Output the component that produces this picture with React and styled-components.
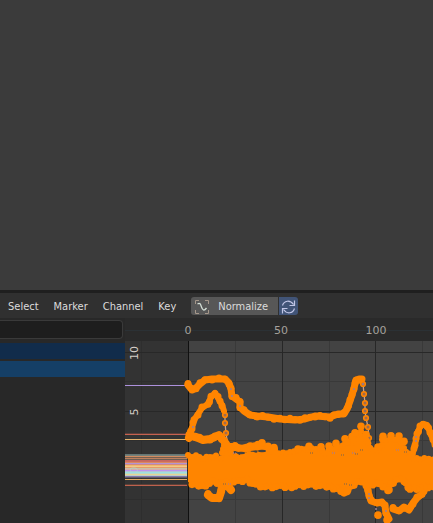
import React from "react";
import styled, { createGlobalStyle } from "styled-components";

const GlobalStyle = createGlobalStyle`
  * { box-sizing: border-box; }
  body { margin: 0; background: #3b3b3b; font-family: "DejaVu Sans", sans-serif; }
  button, input { font: inherit; color: inherit; margin: 0; }
`;

const Screen = styled.div`
  display: flex;
  flex-direction: column;
  min-height: 100vh;
  overflow: hidden;
`;

const Viewport = styled.main`
  flex: 1;
  background: #3b3b3b;
  border-bottom: 3px solid #1f1f1f;
`;

const Editor = styled.section`
  background: #282828;
`;

const Header = styled.header`
  display: flex;
  align-items: center;
  gap: 15px;
  height: 25px;
  padding: 1px 0 0 8px;
  background: #303030;
  font-family: "DejaVu Sans Condensed", "DejaVu Sans", sans-serif;
  font-size: 11px;
  line-height: 16px;
  color: #dcdcdc;
`;

const Menu = styled.nav`
  display: flex;
  gap: 15px;
`;

const MenuButton = styled.button`
  padding: 2px 0 0;
  border: 0;
  background: none;
  white-space: nowrap;
`;

const ButtonGroup = styled.div`
  display: flex;
  gap: 1px;
  border-radius: 3px;
  overflow: hidden;
`;

const GroupButton = styled.button`
  display: flex;
  align-items: center;
  justify-content: center;
  gap: 8px;
  height: 18px;
  padding: ${(p) => (p.$icon ? "2px 2px 0" : "2px 10px 0 3px")};
  border: 0;
  background: ${(p) => (p.$icon ? "#415477" : "#575757")};
`;

const Body = styled.div`
  display: flex;
`;

const Channels = styled.aside`
  flex: 0 0 125px;
  background: #282828;
`;

const Search = styled.div`
  height: 25px;
  padding: 2px 2px 0 0;
`;

const SearchInput = styled.input`
  display: block;
  width: 100%;
  height: 19px;
  border: 1px solid #3a3a3a;
  border-left: 0;
  border-radius: 0 4px 4px 0;
  background: #1e1e1e;
  font-size: 11px;
`;

const ChannelRow = styled.div`
  height: 16px;
  margin-bottom: 2px;
  background: ${(p) => (p.$active ? "#153f66" : "#112c4b")};
`;

const Graph = styled.div`
  flex: 1;
  min-width: 0;
`;

const Drawing = styled.svg`
  display: block;
  width: 100%;
  height: ${(p) => p.$height}px;
  background: ${(p) => p.$fill};
  font-family: "DejaVu Sans", sans-serif;
  font-size: 11px;
`;

const KEY = "#ff8500";

const upper = [[188,385],[192,390],[196,388],[200,384],[205,380],[212,379],[219,379],[225,379],[229,383],[231,389],[232,396],[236,399],[240,402],[240,407],[244,411],[250,415],[257,416],[268,417],[280,419],[295,420],[305,419],[315,416],[330,417],[338,414],[344,414],[347,409],[350,401],[352,395],[354,388],[356,380],[359,379],[362,379]];
const drop = [[363,384],[364,394],[365,403],[365,411],[366,418],[368,427],[369,438],[370,448],[370,458]];
const arch = [[189,436],[192,428],[194,420],[198,414],[202,408],[208,404],[211,397],[215,393],[218,398],[222,405],[224,411]];
const archDrop = [[225,415],[225,423],[226,433],[227,440]];
const middle = [[189,438],[191,436],[196,437],[203,440],[210,439],[215,437],[219,435],[224,441],[228,447],[235,447],[242,449],[250,447],[258,446],[266,448],[274,450]];
const hump = [[412,456],[414,449],[416,440],[417,434],[420,427],[423,424],[427,425],[430,432],[433,440],[437,448]];
const lower = [[367,487],[369,495],[371,501],[377,503],[382,502],[385,506],[386,513],[389,519]];
const lowerRight = [[393,509],[399,511],[404,507],[409,510],[413,503],[417,498],[422,494],[426,486]];
const low = [[208,495],[212,498],[219,498],[221,492],[222,486],[228,486],[231,490]];

const massTop = [[188,456],[190,457],[196,456],[203,458],[210,457],[216,456],[221,458],[224,445],[230,448],[231,454],[236,456],[240,457],[246,455],[256,455],[264,453],[274,452],[283,453],[290,453],[298,450],[308,449],[320,449],[325,453],[332,449],[340,448],[345,443],[352,443],[355,436],[361,432],[365,436],[370,448],[377,451],[382,444],[382,440],[399,440],[404,448],[410,457],[420,459],[433,459],[437,460]];
const massBottom = [[437,487],[428,487],[420,488],[410,489],[404,481],[396,480],[388,488],[383,486],[376,483],[366,485],[357,482],[348,490],[340,489],[330,487],[320,486],[308,485],[295,486],[285,487],[276,487],[265,487],[256,485],[247,480],[238,482],[225,483],[213,482],[202,486],[192,485],[188,482]];
const extraKeys = [[258,445],[262,443],[268,446],[274,448],[298,449],[309,446],[321,447],[329,446],[336,443],[345,439],[347,442],[352,437],[355,433],[361,426],[366,435],[378,447],[383,436],[391,436],[399,436],[404,441],[389,490],[378,515],[388,491],[344,493],[341,491],[347,492],[387,520]];

const toPath = (pts) => "M" + pts.map((p) => p.join(" ")).join("L");

const densify = (pts, step) => {
  const out = [];
  for (let i = 1; i < pts.length; i += 1) {
    const [x0, y0] = pts[i - 1];
    const [x1, y1] = pts[i];
    const n = Math.max(1, Math.round(Math.hypot(x1 - x0, y1 - y0) / step));
    for (let k = 0; k < n; k += 1) {
      const t = k / n;
      out.push([x0 + (x1 - x0) * t, y0 + (y1 - y0) * t]);
    }
  }
  return out;
};

const wobble = (i) => ((i * 37) % 11) / 11 - 0.5;

function Keys({ points, radius = 3, spread = 1 }) {
  return points.map(([x, y], i) => (
    <circle key={i} cx={x} cy={y + wobble(i) * spread} r={radius} fill={KEY} />
  ));
}

function Curve({ points, width = 6 }) {
  return (
    <g>
      <path d={toPath(points)} fill="none" stroke={KEY} strokeWidth={width} strokeLinejoin="round" strokeLinecap="round" />
      <Keys points={densify(points, 5)} radius={3.5} spread={3} />
    </g>
  );
}

function SparseCurve({ points }) {
  return (
    <g>
      <path d={toPath(points)} fill="none" stroke="#c9a18c" strokeWidth="1.3" />
      {densify(points, 8).map(([x, y], i) => (
        <circle key={i} cx={x} cy={y} r="2.3" fill="#a06b4e" stroke={KEY} strokeWidth="1.6" />
      ))}
    </g>
  );
}

const extrapolated = [
  [385, "#ad91dc"], [434, "#c66250"], [439, "#e6b66f"],
  [454, "#657675"], [455, "#758078"], [456, "#d18b60"], [457, "#755f4f"],
  [458, "#bd805d"], [459, "#6d5d54"], [460, "#c66760"], [461, "#cd6c5c"],
  [462, "#d98963"], [463, "#b394d5"], [464, "#d18a82"], [465, "#efb86c"],
  [466, "#f3c885"], [467, "#e59c69"], [468, "#c8c1a6"], [469, "#d7adac"],
  [470, "#bd94ee"], [471, "#b5c2d7"], [472, "#9ee0df"], [473, "#b4dcc8"],
  [474, "#e8d295"], [475, "#bfd0c2"], [476, "#8075aa"], [477, "#5f5a68"],
  [479, "#e2aa67"], [485, "#be614d"],
];

const gaps = [[234,453],[238,453],[311,453],[333,453],[342,455],[224,484],[229,484],[345,484],[350,485],[353,453],[356,454],[361,450],[397,450],[405,452]];

function GraphDrawing() {
  return (
    <Drawing $height={182} $fill="#434343" role="img" aria-label="Animation curves">
      <g transform="translate(-125 -341)">
        <rect x="125" y="341" width="63" height="182" fill="#333333" />
        <g shapeRendering="crispEdges">
          {[141, 235, 329, 422].map((x) => <rect key={x} x={x} y="341" width="1" height="182" fill={x < 188 ? "#2e2e2e" : "#393939"} />)}
          {[381, 440, 499].map((y) => (
            <g key={y}>
              <rect x="125" y={y} width="63" height="1" fill="#2e2e2e" />
              <rect x="188" y={y} width="100%" height="1" fill="#393939" />
            </g>
          ))}
          {[352, 411, 470].map((y) => <rect key={y} x="125" y={y} width="100%" height="1" fill="#282828" />)}
          {[282, 375].map((x) => <rect key={x} x={x} y="341" width="1" height="182" fill="#272727" />)}
          <rect x="188" y="341" width="1" height="182" fill="#101010" />
          {extrapolated.map(([y, c]) => <rect key={y} x="125" y={y} width="62" height="1" fill={c} />)}
          <rect x="125" y="433" width="62" height="1" fill="#5d3f3a" />
          <rect x="125" y="484" width="62" height="1" fill="#5d4038" />
        </g>
        <SparseCurve points={drop} />
        <SparseCurve points={archDrop} />
        <Curve points={upper} width={7} />
        <Curve points={arch} />
        <Curve points={middle} width={8} />
        <Curve points={hump} />
        <Curve points={lower} width={7} />
        <Curve points={lowerRight} width={7} />
        <Curve points={low} width={8} />
        <path d={`${toPath(massTop.concat(massBottom))}Z`} fill={KEY} />
        <Keys points={densify(massTop, 4)} radius={3} spread={2} />
        <Keys points={densify(massBottom, 4)} radius={3.6} spread={3} />
        <Keys points={extraKeys} radius={3.8} />
        {gaps.map(([x, y], i) => (
          <path key={i} d={`M${x - 1} ${y}h1m1 0h1`} stroke={i % 3 ? "#77624f" : "#8f79b8"} strokeWidth="1.2" />
        ))}
        {[[262, 451], [241, 453]].map(([x, y]) => <ellipse key={x} cx={x} cy={y} rx="4" ry="1.2" fill="#434343" />)}
        {[[231, 389], [232, 396], [193, 427], [240, 406], [354, 389], [363, 384], [416, 437], [416, 441], [369, 494], [369, 498], [376, 509], [386, 511]].map(([x, y]) => (
          <circle key={`${x}-${y}`} cx={x} cy={y} r="1" fill="#9b8196" />
        ))}
        <g fill="#d6d0c8" textAnchor="middle">
          <text transform="translate(138 353) rotate(-90)">10</text>
          <text transform="translate(138 412) rotate(-90)">5</text>
          <text transform="translate(138 470) rotate(-90)" fill="#a5dcda" fillOpacity=".5">0</text>
        </g>
      </g>
    </Drawing>
  );
}

function Ruler() {
  return (
    <Drawing $height={23} $fill="#2a2a2a" role="img" aria-label="Frames">
      <rect x="0" y="12" width="100%" height="1" fill="#2b3135" />
      <g fill="#a5a19c" textAnchor="middle">
        <text x="63" y="16">0</text>
        <text x="156" y="16">50</text>
        <text x="251" y="16">100</text>
      </g>
    </Drawing>
  );
}

function NormalizeIcon() {
  return (
    <svg width="16" height="16" viewBox="0 0 16 16" fill="none" aria-hidden="true">
      <path d="M1.5 5V1.5H5M11 1.5h3.500V5M14.500 11v3.500H11M5 14.500H1.500V11" stroke="#a5978a" />
      <path d="M3.500 5C6 3.500 6.500 5 7.500 8s2.500 4.500 5 1" stroke="#d3ded5" strokeWidth="1.3" />
    </svg>
  );
}

function RefreshIcon() {
  return (
    <svg width="15" height="16" viewBox="0 0 15 16" fill="none" stroke="#c0c5e5" strokeWidth="1.2" aria-hidden="true">
      <path d="M1.500 6.500C3 1.500 9 .5 12.500 5.500M13.500 1.500v5h-5M13.500 9.500C12 14.500 6 15.500 2.500 10.500M1.500 14.500v-5h5" />
    </svg>
  );
}

export default function App() {
  return (
    <Screen>
      <GlobalStyle />
      <Viewport />
      <Editor>
        <Header>
          <Menu>
            {["Select", "Marker", "Channel", "Key"].map((name) => (
              <MenuButton key={name} type="button">{name}</MenuButton>
            ))}
          </Menu>
          <ButtonGroup>
            <GroupButton type="button"><NormalizeIcon />Normalize</GroupButton>
            <GroupButton type="button" $icon aria-label="Auto normalize"><RefreshIcon /></GroupButton>
          </ButtonGroup>
        </Header>
        <Body>
          <Channels>
            <Search><SearchInput type="text" aria-label="Filter channels" /></Search>
            <ChannelRow />
            <ChannelRow $active />
          </Channels>
          <Graph>
            <Ruler />
            <GraphDrawing />
          </Graph>
        </Body>
      </Editor>
    </Screen>
  );
}
